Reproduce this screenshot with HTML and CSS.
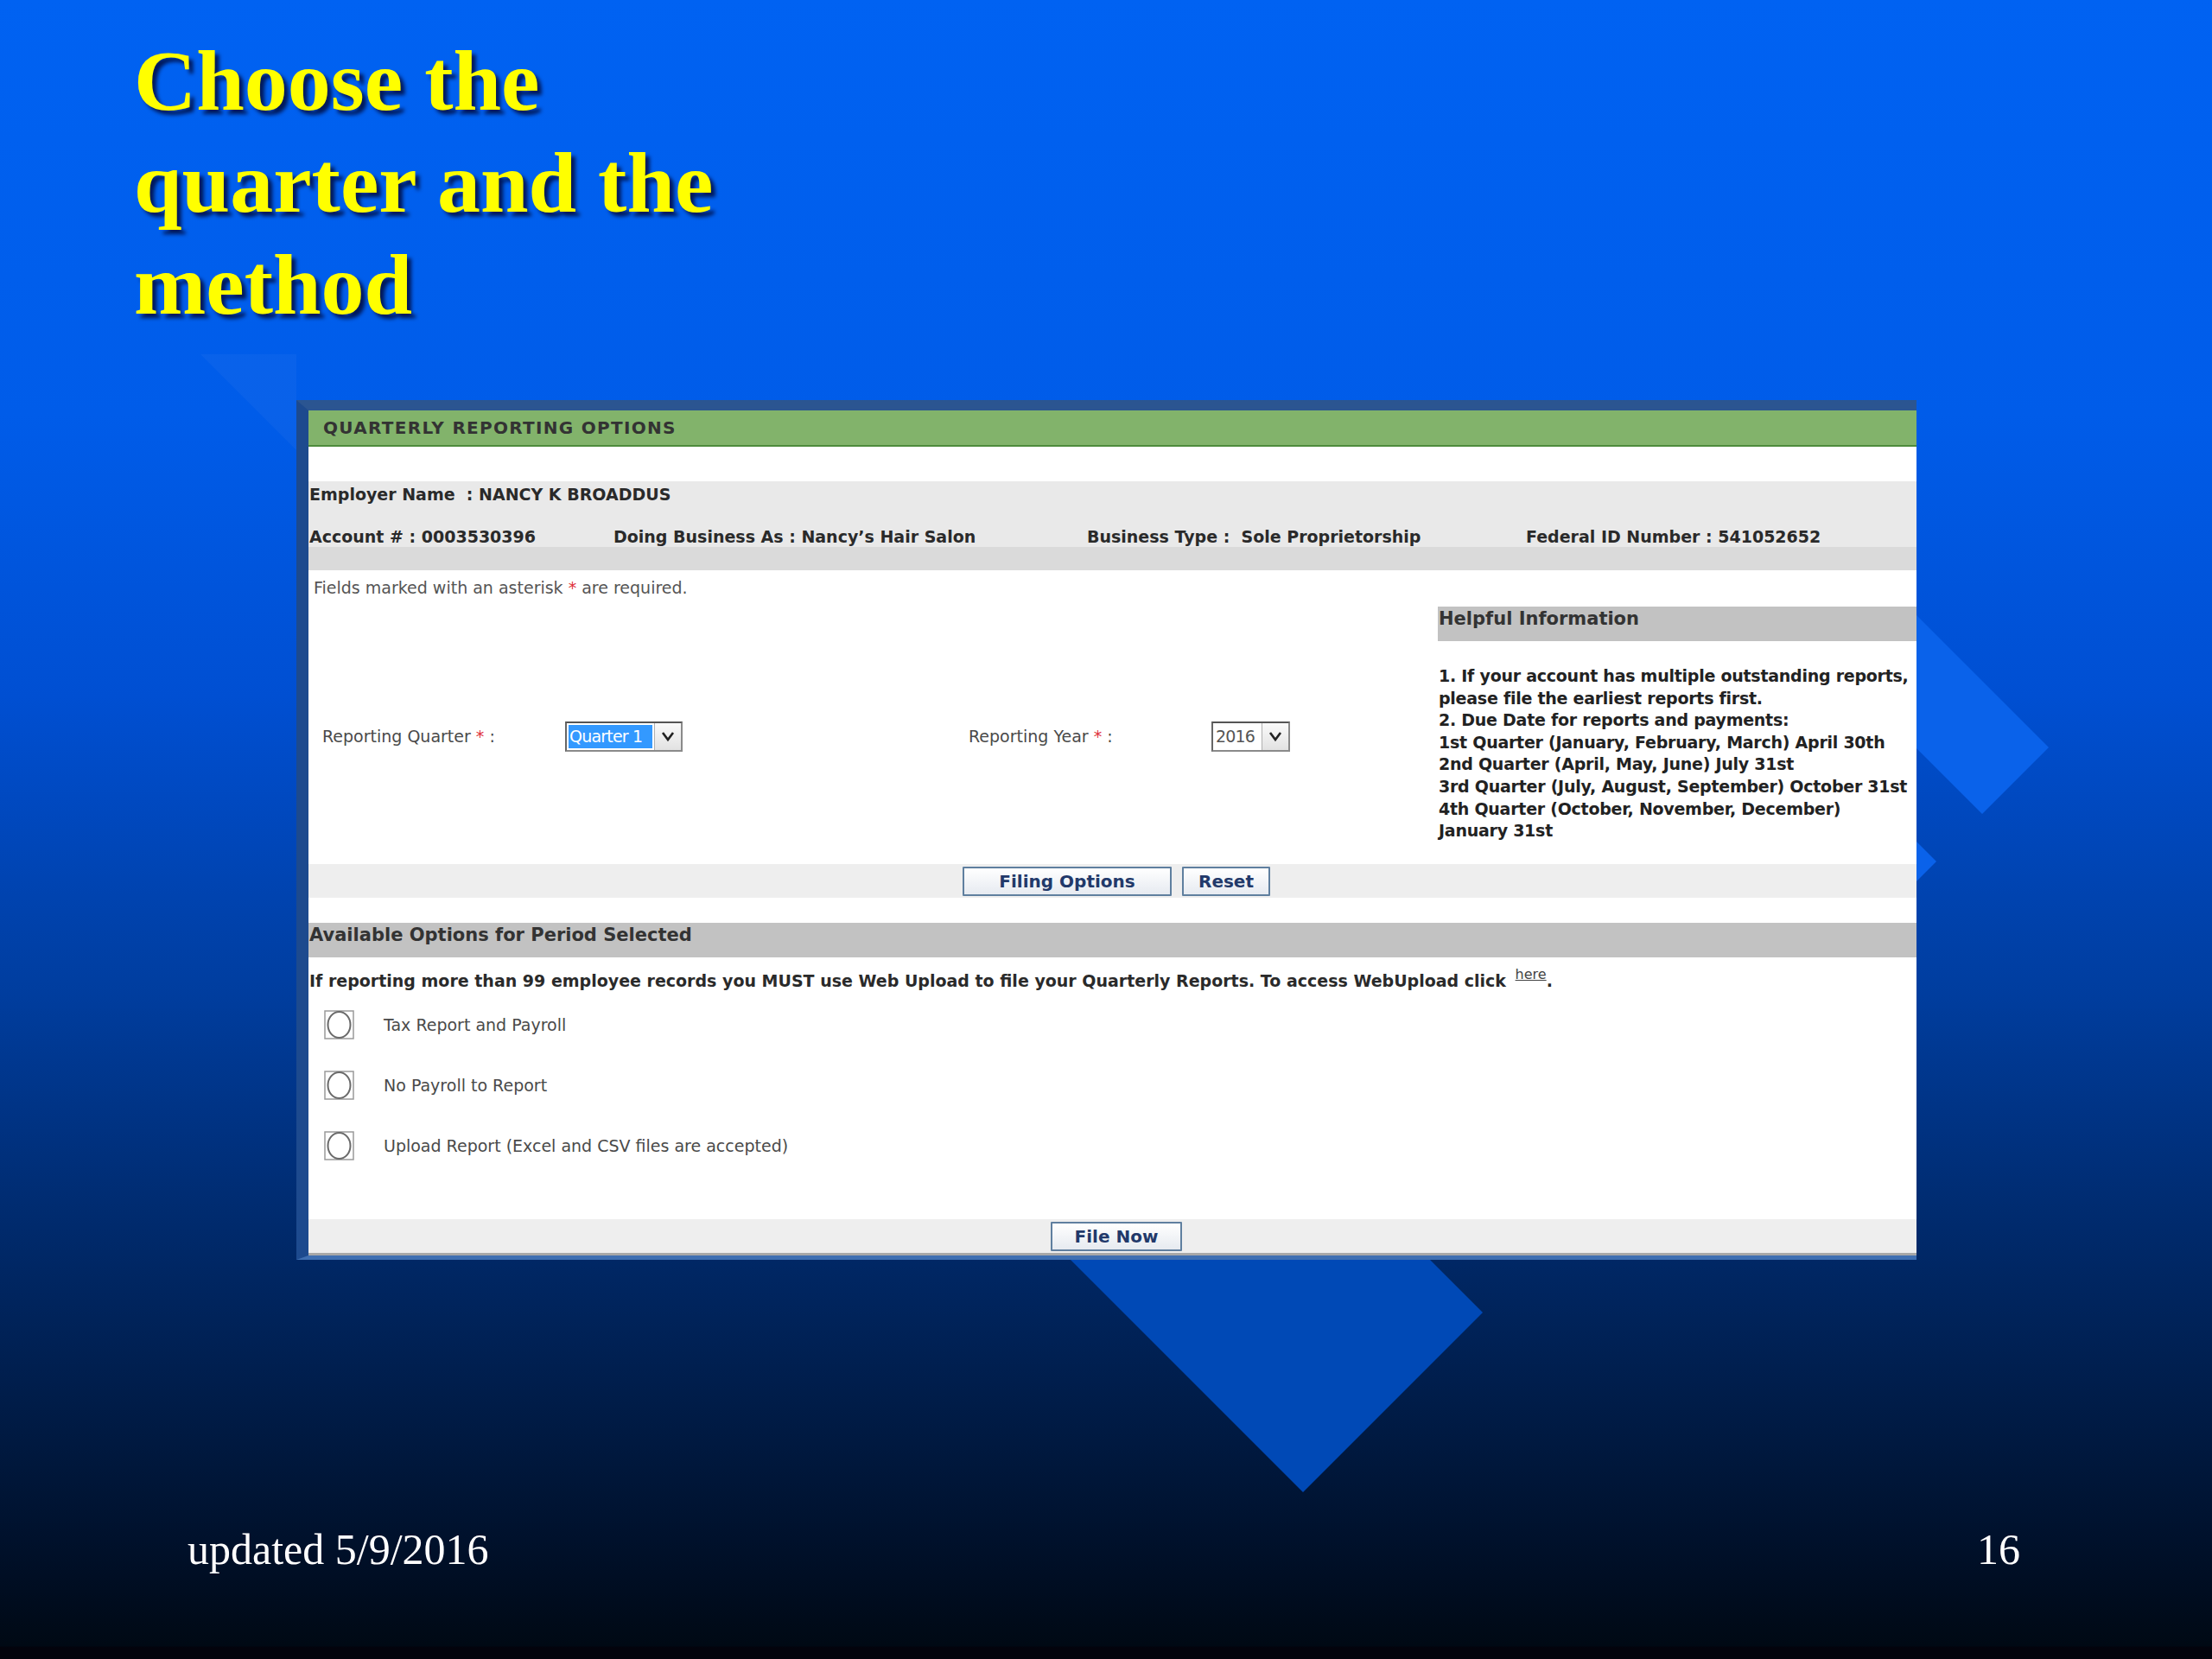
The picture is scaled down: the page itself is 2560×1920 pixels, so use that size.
FILE: index.html
```html
<!DOCTYPE html>
<html lang="en">
<head>
  <meta charset="UTF-8">
  <title>Choose the quarter and the method</title>
  <link rel="stylesheet" href="styles.css">
</head>
<body>

<div class="slide">
  <svg class="backdrop" viewBox="0 0 2560 1920" width="2560" height="1920">
    <polygon class="shape-faint" points="232,410 343,521 343,410"/>
    <polygon class="shape-light" points="2371,865 2294,942 2100,748 2177,671"/>
    <polygon class="shape-light" points="2241,997 2200,1038 2120,958 2161,917"/>
    <polygon class="shape-deep" points="1508,1727 1716,1519 1430,1233 1222,1441"/>
  </svg>

  <h1 class="title">Choose the<br>quarter and the<br>method</h1>

  <div class="panel">
    <div class="panel-head">QUARTERLY REPORTING OPTIONS</div>
    <div class="panel-gap"></div>

    <div class="employer">
      <div class="employer-name">Employer Name &nbsp;: NANCY K BROADDUS</div>
      <div class="employer-row">
        <span>Account # : 0003530396</span>
        <span>Doing Business As : Nancy’s Hair Salon</span>
        <span>Business Type : &nbsp;Sole Proprietorship</span>
        <span>Federal ID Number : 541052652</span>
      </div>
    </div>
    <div class="strip"></div>

    <div class="required">Fields marked with an asterisk <span class="star">*</span> are required.</div>

    <div class="form-area">
      <div class="fields">
        <div class="field-label">Reporting Quarter <span class="star">*</span> :</div>
        <div class="select select-quarter">
          <span class="select-value is-selected">Quarter 1</span>
          <span class="select-arrow"><svg width="18" height="14" viewBox="0 0 18 14"><path d="M3 3 L9 11 L15 3" fill="none" stroke="#222" stroke-width="2.6"/></svg></span>
        </div>
        <div class="field-label">Reporting Year <span class="star">*</span> :</div>
        <div class="select select-year">
          <span class="select-value">2016</span>
          <span class="select-arrow"><svg width="18" height="14" viewBox="0 0 18 14"><path d="M3 3 L9 11 L15 3" fill="none" stroke="#222" stroke-width="2.6"/></svg></span>
        </div>
      </div>

      <div class="helpful">
        <div class="helpful-head">Helpful Information</div>
        <div class="helpful-body">
          1. If your account has multiple outstanding reports,<br>
          please file the earliest reports first.<br>
          2. Due Date for reports and payments:<br>
          1st Quarter (January, February, March) April 30th<br>
          2nd Quarter (April, May, June) July 31st<br>
          3rd Quarter (July, August, September) October 31st<br>
          4th Quarter (October, November, December)<br>
          January 31st
        </div>
      </div>
    </div>

    <div class="button-bar">
      <button class="btn btn-filing">Filing Options</button>
      <button class="btn btn-reset">Reset</button>
    </div>

    <div class="section-gap"></div>
    <div class="section-head">Available Options for Period Selected</div>
    <div class="notice">If reporting more than 99 employee records you MUST use Web Upload to file your Quarterly Reports. To access WebUpload click <a class="here" href="#">here</a>.</div>

    <div class="options">
      <div class="option">
        <svg class="radio" width="35" height="34" viewBox="0 0 35 34"><rect x="1" y="1" width="33" height="32" fill="#fff" stroke="#9a9a9a" stroke-width="1.5"/><ellipse cx="17.5" cy="17" rx="13" ry="15" fill="none" stroke="#6a6a6a" stroke-width="2"/></svg>
        <span>Tax Report and Payroll</span>
      </div>
      <div class="option">
        <svg class="radio" width="35" height="34" viewBox="0 0 35 34"><rect x="1" y="1" width="33" height="32" fill="#fff" stroke="#9a9a9a" stroke-width="1.5"/><ellipse cx="17.5" cy="17" rx="13" ry="15" fill="none" stroke="#6a6a6a" stroke-width="2"/></svg>
        <span>No Payroll to Report</span>
      </div>
      <div class="option">
        <svg class="radio" width="35" height="34" viewBox="0 0 35 34"><rect x="1" y="1" width="33" height="32" fill="#fff" stroke="#9a9a9a" stroke-width="1.5"/><ellipse cx="17.5" cy="17" rx="13" ry="15" fill="none" stroke="#6a6a6a" stroke-width="2"/></svg>
        <span>Upload Report (Excel and CSV files are accepted)</span>
      </div>
    </div>

    <div class="button-bar button-bar-last">
      <button class="btn btn-file">File Now</button>
    </div>
  </div>

  <div class="footer">
    <span>updated 5/9/2016</span>
    <span>16</span>
  </div>
</div>

</body>
</html>
```

FILE: styles.css
```css
body {
  margin: 0;
  background: #000;
}

.slide {
  position: relative;
  width: 2560px;
  height: 1920px;
  overflow: hidden;
  display: flex;
  flex-direction: column;
  background: linear-gradient(to bottom,
    #0062f2 0%,
    #005ce9 25%,
    #004fd2 42%,
    #003d9e 60%,
    #002a6c 74%,
    #001940 87%,
    #000e24 95%,
    #000914 99.2%,
    #03030c 99.3%);
}

.backdrop {
  position: absolute;
  left: 0;
  top: 0;
}

.shape-faint {
  fill: rgba(255, 255, 255, 0.035);
}

.shape-light {
  fill: #0a62ea;
}

.shape-deep {
  fill: #0049b6;
}

.title {
  position: relative;
  margin: 35px 0 0 155px;
  font: bold 100px/118px "Liberation Serif", serif;
  color: #ffff00;
  text-shadow: 5px 5px 4px rgba(0, 0, 40, 0.75);
}

/* screenshot panel */
.panel {
  position: relative;
  box-sizing: border-box;
  width: 1875px;
  margin: 74px 0 0 343px;
  border-top: 12px solid #2b5591;
  border-left: 14px solid #1d4a8e;
  border-bottom: 5px solid #3f6fb2;
  background: #fff;
  overflow: hidden;
  font-family: "DejaVu Sans", Verdana, sans-serif;
  color: #2a2a2a;
}

.panel-head {
  height: 40px;
  padding-left: 17px;
  background: #82b36b;
  border-bottom: 2px solid #4e8b3c;
  font: bold 20px/40px "DejaVu Sans", sans-serif;
  letter-spacing: 1.3px;
  color: #333;
}

.panel-gap {
  height: 40px;
}

.employer {
  height: 76px;
  background: #e9e9e9;
  font-weight: bold;
  font-size: 19px;
}

.employer-name {
  line-height: 30px;
  padding-left: 1px;
}

.employer-row {
  display: grid;
  grid-template-columns: 352px 548px 508px 1fr;
  margin-top: 22px;
  line-height: 24px;
  padding-left: 1px;
  white-space: nowrap;
}

.strip {
  height: 27px;
  background: #dadada;
}

.required {
  height: 40px;
  line-height: 40px;
  padding-left: 6px;
  font-size: 19px;
  color: #555;
}

.star {
  color: #e0303a;
}

.form-area {
  display: flex;
  height: 300px;
}

.fields {
  flex: 1;
  display: grid;
  grid-template-columns: 281px 467px 281px 1fr;
  align-items: center;
  align-content: center;
  box-sizing: border-box;
  height: 300px;
  padding: 4px 0 0 16px;
  font-size: 19px;
  color: #4a4a4a;
}

.select {
  display: flex;
  align-items: stretch;
  height: 35px;
  box-sizing: border-box;
  border: 2px solid #8a8a8a;
  border-top-color: #555;
  border-left-color: #666;
  background: #fff;
  font-size: 19px;
}

.select-quarter {
  width: 136px;
}

.select-year {
  width: 91px;
}

.select-value {
  flex: 1;
  margin: 2px;
  padding-left: 1px;
  line-height: 27px;
  letter-spacing: -0.8px;
  white-space: nowrap;
  overflow: hidden;
  color: #555;
}

.select-value.is-selected {
  background: #3399ff;
  color: #fff;
}

.select-arrow {
  width: 30px;
  display: flex;
  align-items: center;
  justify-content: center;
  background: linear-gradient(#fafafa, #e2e2e2);
  border-left: 1px solid #b0b0b0;
}

.helpful {
  width: 554px;
  flex: none;
  white-space: nowrap;
}

.helpful-head {
  height: 40px;
  margin-top: 2px;
  padding-left: 1px;
  background: #c2c2c2;
  font: bold 21px/28px "DejaVu Sans", sans-serif;
  color: #333;
}

.helpful-body {
  margin-top: 28px;
  padding-left: 1px;
  font-weight: bold;
  font-size: 19px;
  line-height: 25.6px;
  letter-spacing: -0.25px;
  color: #222;
}

.button-bar {
  display: flex;
  justify-content: center;
  align-items: center;
  gap: 12px;
  height: 39px;
  padding-left: 9px;
  background: #eeeeee;
}

.btn {
  height: 34px;
  box-sizing: border-box;
  padding: 0;
  border: 2px solid #5f7f9f;
  border-radius: 1px;
  background: linear-gradient(#ffffff, #e6eaf0);
  font: bold 20px "DejaVu Sans", sans-serif;
  color: #22396a;
}

.btn-filing {
  width: 242px;
}

.btn-reset {
  width: 102px;
}

.btn-file {
  width: 152px;
}

.section-gap {
  height: 29px;
}

.section-head {
  height: 40px;
  padding-left: 1px;
  background: #c2c2c2;
  font: bold 21px/28px "DejaVu Sans", sans-serif;
  color: #333;
}

.notice {
  margin-top: 13px;
  padding-left: 1px;
  line-height: 28px;
  font-weight: bold;
  font-size: 19px;
  white-space: nowrap;
}

.here {
  position: relative;
  top: -9px;
  margin-left: 4px;
  font-weight: normal;
  font-size: 16px;
  color: #444;
}

.options {
  margin-bottom: 50px;
}

.option {
  display: flex;
  align-items: center;
  height: 70px;
  padding-left: 18px;
  font-size: 19px;
  color: #4a4a4a;
}

.radio {
  margin-right: 34px;
}

.button-bar-last {
  border-bottom: 3px solid #a8a8a8;
}

.footer {
  position: relative;
  margin-top: auto;
  display: flex;
  justify-content: space-between;
  padding: 0 222px 97px 217px;
  font: 50px/60px "Liberation Serif", serif;
  color: #fff;
}
```
